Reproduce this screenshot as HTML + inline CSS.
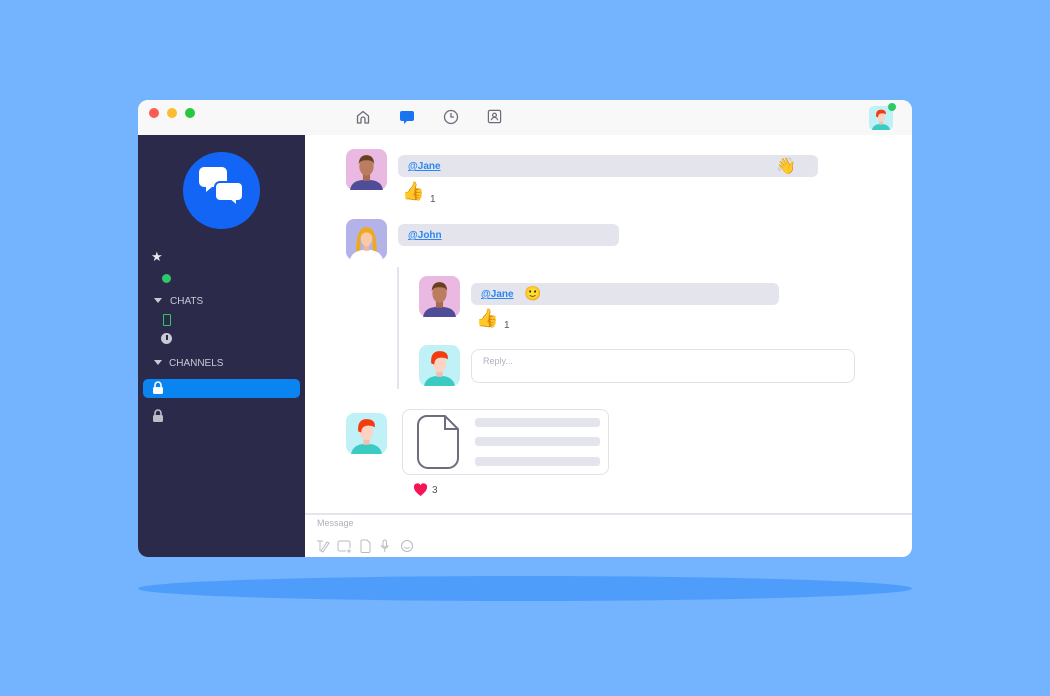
<!DOCTYPE html>
<html><head><style>
*{margin:0;padding:0;box-sizing:border-box}
body{width:1050px;height:696px;background:#74b3fe;position:relative;overflow:hidden;font-family:"Liberation Sans",sans-serif}
.a{position:absolute}
.win{left:138px;top:100px;width:774px;height:457px;border-radius:10px;overflow:hidden;background:#fff}
.bar{left:0;top:0;width:774px;height:35px;background:#f8f8f9}
.side{left:0;top:35px;width:167px;height:422px;background:#2c2a4a}
.bub{background:#e4e4ec;border-radius:6px;height:22px}
.m{color:#2b86f5;text-decoration:underline;font-size:10px;font-weight:bold}
.sl{color:#c9c9d6;font-size:10px}
.line{background:#e4e4ec;border-radius:3px;height:9px;width:125px}
</style></head><body>
<svg width="0" height="0" style="position:absolute">
<defs>
<symbol id="man" viewBox="0 0 40 40"><rect width="40" height="40" rx="8" fill="#e9b9e2"/><path d="M4 40c1-8 8-10 16-10s15 2 16 10z" fill="#4f4d97"/><rect x="16.5" y="22" width="7" height="9" fill="#a86a50"/><ellipse cx="20" cy="17" rx="7" ry="9" fill="#bb7d5f"/><path d="M12.5 15c0-7 4-9 7.5-9s7.5 2 7.5 9c-1-3-3-4-7.5-4s-6.5 1-7.5 4z" fill="#6a3f1e"/></symbol>
<symbol id="wom" viewBox="0 0 40 40"><rect width="40" height="40" rx="8" fill="#b3b3e8"/><path d="M10 32c0-16 3-24 10-24s10 8 10 24h-4V17h-12v15z" fill="#f0a81c"/><path d="M4 40c1-7 8-10 16-10s15 3 16 10z" fill="#fff"/><rect x="17.5" y="24" width="5" height="7" fill="#f0b898"/><ellipse cx="20" cy="19" rx="5.5" ry="7.5" fill="#f9c9a8"/><path d="M14 17c1-5 3-7 6-7s5 2 6 7c-2-3-4-4-6-4s-4 1-6 4z" fill="#f0a81c"/></symbol>
<symbol id="red" viewBox="0 0 40 40"><rect width="40" height="40" rx="8" fill="#c0f1f6"/><path d="M5 40c1-7 7-10 15-10s14 3 15 10z" fill="#3ccbc3"/><rect x="17" y="23" width="6" height="8" fill="#f0bfae"/><ellipse cx="20" cy="18" rx="6.5" ry="8.5" fill="#fbd3c4"/><path d="M12 18c-1-9 3-12 8-12 6 0 9 3 8 8-3-2-7-2-10-1-2 1-3 3-3 6z" fill="#f23c10"/></symbol>
</defs></svg>
<div class="a" style="left:138px;top:576px;width:774px;height:25px;border-radius:50%;background:#4f9dfb"></div>
<div class="a win">
 <div class="a bar">
  <div class="a" style="left:11px;top:8px;width:10px;height:10px;border-radius:50%;background:#fd5c55"></div>
  <div class="a" style="left:29px;top:8px;width:10px;height:10px;border-radius:50%;background:#fdbb2e"></div>
  <div class="a" style="left:47px;top:8px;width:10px;height:10px;border-radius:50%;background:#27c840"></div>
  <svg class="a" style="left:217px;top:9px" width="16" height="16" viewBox="0 0 16 16" fill="none" stroke="#6b6b7a" stroke-width="1.3"><path d="M2.5 14V7L8 2.5 13.5 7v7h-3.5v-4a2 2 0 0 0-4 0v4z" stroke-linejoin="round"/></svg>
  <svg class="a" style="left:261px;top:9px" width="16" height="16" viewBox="0 0 16 16"><path d="M3 2h10a2 2 0 0 1 2 2v6a2 2 0 0 1-2 2H8l-3 3v-3H3a2 2 0 0 1-2-2V4a2 2 0 0 1 2-2z" fill="#1a73f0"/></svg>
  <svg class="a" style="left:305px;top:9px" width="16" height="16" viewBox="0 0 16 16" fill="none" stroke="#6b6b7a" stroke-width="1.3"><circle cx="8" cy="8" r="6.5"/><path d="M8 4v4h3"/></svg>
  <svg class="a" style="left:349px;top:9px" width="15" height="15" viewBox="0 0 16 16" fill="none" stroke="#6b6b7a" stroke-width="1.3"><rect x="1.5" y="1.5" width="13" height="13" rx="1.5"/><circle cx="8" cy="6.5" r="2"/><path d="M4.5 12c.5-2 2-3 3.5-3s3 1 3.5 3"/></svg>
  <svg class="a" style="left:731px;top:6px" width="24" height="24"><use href="#red"/></svg>
  <div class="a" style="left:750px;top:3px;width:8px;height:8px;border-radius:50%;background:#2ec866"></div>
 </div>
 <div class="a side">
  <div class="a" style="left:45px;top:17px;width:77px;height:77px;border-radius:50%;background:#1366f5"></div>
  <svg class="a" style="left:61px;top:32px" width="46" height="46" viewBox="0 0 46 46"><path d="M5 0h18a5 5 0 0 1 5 5v10a5 5 0 0 1-5 5H13l-6 5v-5H5a5 5 0 0 1-5-5V5a5 5 0 0 1 5-5z" fill="#fff"/><path d="M21 15h18a5 5 0 0 1 5 5v9a5 5 0 0 1-5 5h-1v5l-6-5H21a5 5 0 0 1-5-5v-9a5 5 0 0 1 5-5z" fill="#fff" stroke="#1366f5" stroke-width="2"/></svg>
  <div class="a" style="left:13px;top:114px;color:#e8e8ef;font-size:13px">★</div>
  <div class="a" style="left:24px;top:139px;width:9px;height:9px;border-radius:50%;background:#2ec866"></div>
  <div class="a" style="left:16px;top:163px;width:0;height:0;border-left:4px solid transparent;border-right:4px solid transparent;border-top:5px solid #c9c9d6"></div>
  <div class="a sl" style="left:32px;top:161px">CHATS</div>
  <div class="a" style="left:25px;top:179px;width:8px;height:12px;border:1.5px solid #2ec866;border-radius:1.5px"></div>
  <div class="a" style="left:23px;top:198px;width:11px;height:11px;border-radius:50%;background:#c9c9d6"></div>
  <div class="a" style="left:28px;top:200px;width:1.5px;height:5px;background:#2c2a4a"></div>
  <div class="a" style="left:16px;top:225px;width:0;height:0;border-left:4px solid transparent;border-right:4px solid transparent;border-top:5px solid #c9c9d6"></div>
  <div class="a sl" style="left:31px;top:223px">CHANNELS</div>
  <div class="a" style="left:5px;top:244px;width:157px;height:19px;border-radius:5px;background:#0a84f0"></div>
  <svg class="a" style="left:14px;top:246px" width="12" height="14" viewBox="0 0 12 14"><path d="M3 6V4a3 3 0 0 1 6 0v2" fill="none" stroke="#fff" stroke-width="1.6"/><rect x="1" y="6" width="10" height="7" rx="1.5" fill="#fff"/></svg>
  <svg class="a" style="left:14px;top:274px" width="12" height="14" viewBox="0 0 12 14"><path d="M3 6V4a3 3 0 0 1 6 0v2" fill="none" stroke="#bdbdca" stroke-width="1.6"/><rect x="1" y="6" width="10" height="7" rx="1.5" fill="#bdbdca"/></svg>
 </div>
 <svg class="a" style="left:208px;top:49px" width="41" height="41"><use href="#man"/></svg>
 <div class="a bub" style="left:260px;top:55px;width:420px"><span class="a m" style="left:10px;top:6px">@Jane</span><span class="a" style="left:378px;top:1px;font-size:16px">👋</span></div>
 <div class="a" style="left:264px;top:81px;font-size:18px">👍</div><div class="a" style="left:292px;top:94px;font-size:10px;color:#555">1</div>
 <svg class="a" style="left:208px;top:119px" width="41" height="41"><use href="#wom"/></svg>
 <div class="a bub" style="left:260px;top:124px;width:221px"><span class="a m" style="left:10px;top:6px">@John</span></div>
 <div class="a" style="left:259px;top:167px;width:2px;height:122px;background:#e4e4ec"></div>
 <svg class="a" style="left:281px;top:176px" width="41" height="41"><use href="#man"/></svg>
 <div class="a bub" style="left:333px;top:183px;width:308px"><span class="a m" style="left:10px;top:6px">@Jane</span><span class="a" style="left:53px;top:2px;font-size:14px">🙂</span></div>
 <div class="a" style="left:338px;top:208px;font-size:18px">👍</div><div class="a" style="left:366px;top:220px;font-size:10px;color:#555">1</div>
 <svg class="a" style="left:281px;top:245px" width="41" height="41"><use href="#red"/></svg>
 <div class="a" style="left:333px;top:249px;width:384px;height:34px;border:1px solid #e2e2ea;border-radius:8px"><span class="a" style="left:11px;top:6px;font-size:9px;color:#b0b0bd">Reply...</span></div>
 <svg class="a" style="left:208px;top:313px" width="41" height="41"><use href="#red"/></svg>
 <div class="a" style="left:264px;top:309px;width:207px;height:66px;border:1px solid #e2e2ea;border-radius:8px"></div>
 <svg class="a" style="left:279px;top:315px" width="42" height="54" viewBox="0 0 42 54" fill="none" stroke="#6e6d7d" stroke-width="2"><path d="M10 1h18l13 13v29a10 10 0 0 1-10 10H11A10 10 0 0 1 1 43V10a9 9 0 0 1 9-9z"/><path d="M28 1v13h13"/></svg>
 <div class="a line" style="left:337px;top:318px"></div>
 <div class="a line" style="left:337px;top:337px"></div>
 <div class="a line" style="left:337px;top:357px"></div>
 <svg class="a" style="left:275px;top:382px" width="15" height="15" viewBox="0 0 16 16"><path d="M8 15C3 11 1 8.5 1 5.5A3.7 3.7 0 0 1 8 3.5a3.7 3.7 0 0 1 7 2C15 8.5 13 11 8 15z" fill="#f51555"/></svg>
 <div class="a" style="left:294px;top:385px;font-size:10px;color:#555">3</div>
 <div class="a" style="left:167px;top:413px;width:607px;height:2px;background:#e4e4ec"></div>
 <div class="a" style="left:179px;top:418px;font-size:9px;color:#b0b0bd">Message</div>
 <svg class="a" style="left:178px;top:439px" width="120" height="14" viewBox="0 0 120 14" fill="none" stroke="#b8b8c5" stroke-width="1"><path d="M1 2h6M4 2v10M5 12l6-9 2 1-6 9z"/><path d="M24 2h8a2 2 0 0 1 2 2v5M24 2a2 2 0 0 0-2 2v6a2 2 0 0 0 2 2h6M33 10v4M31 12h4"/><path d="M46 1h5l3 3v8a1.5 1.5 0 0 1-1.5 1.5h-6A1.5 1.5 0 0 1 45 12V2.5A1.5 1.5 0 0 1 46 1z"/><rect x="67" y="1" width="3.5" height="7" rx="1.7"/><path d="M65.5 6a3.2 3.2 0 0 0 6.5 0M68.8 9v4"/><circle cx="91" cy="7" r="5.5"/><path d="M88.5 8a3 3 0 0 0 5 0"/></svg>
</div>
</body></html>
